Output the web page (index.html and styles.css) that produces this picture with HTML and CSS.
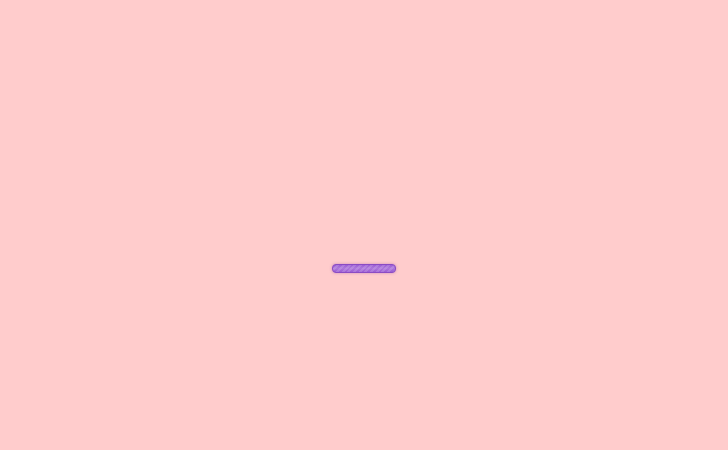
FILE: index.html
```html
<!DOCTYPE html>
<html>
<head>
<meta charset="utf-8">
<link rel="stylesheet" href="styles.css">
</head>
<body>
<main class="stage">
  <div class="loader" role="progressbar" aria-label="Loading"></div>
</main>
</body>
</html>
```
FILE: styles.css
```css
html, body {
  margin: 0;
  height: 100%;
  background: #ffcccc;
}
.stage {
  display: flex;
  justify-content: center;
  padding-top: 264px;
}
.loader {
  width: 62px;
  height: 7px;
  border: 1px solid #8a4cc4;
  border-radius: 4px;
  background-color: #9c5cd4;
  background-image:
    linear-gradient(to bottom, rgba(255,255,255,0) 0, rgba(255,255,255,0.18) 45%, rgba(255,255,255,0) 100%),
    repeating-linear-gradient(-45deg, rgba(255,255,255,0.14) 0 2px, rgba(255,255,255,0) 2px 4px);
  box-shadow: 0 0 3px rgba(140, 60, 170, 0.45);
}
```
